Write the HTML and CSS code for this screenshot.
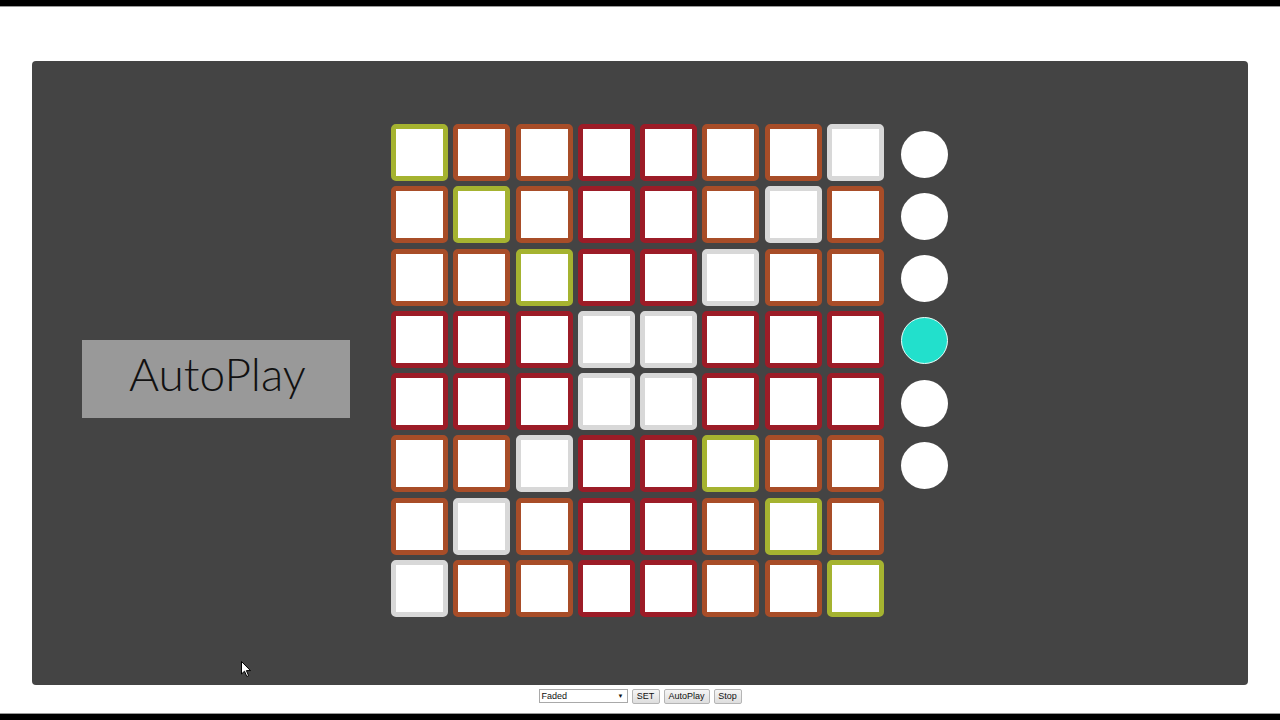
FILE: index.html
```html
<!DOCTYPE html>
<html>
<head>
<meta charset="utf-8">
<link rel="stylesheet" href="styles.css">
</head>
<body>
<div class="topbar"></div>
<div class="page">
  <div class="panel">
    <div class="autoplay">AutoPlay</div>
    <div class="grid">
      <div class="cell g"></div><div class="cell o"></div><div class="cell o"></div><div class="cell r"></div><div class="cell r"></div><div class="cell o"></div><div class="cell o"></div><div class="cell w"></div>
      <div class="cell o"></div><div class="cell g"></div><div class="cell o"></div><div class="cell r"></div><div class="cell r"></div><div class="cell o"></div><div class="cell w"></div><div class="cell o"></div>
      <div class="cell o"></div><div class="cell o"></div><div class="cell g"></div><div class="cell r"></div><div class="cell r"></div><div class="cell w"></div><div class="cell o"></div><div class="cell o"></div>
      <div class="cell r"></div><div class="cell r"></div><div class="cell r"></div><div class="cell w"></div><div class="cell w"></div><div class="cell r"></div><div class="cell r"></div><div class="cell r"></div>
      <div class="cell r"></div><div class="cell r"></div><div class="cell r"></div><div class="cell w"></div><div class="cell w"></div><div class="cell r"></div><div class="cell r"></div><div class="cell r"></div>
      <div class="cell o"></div><div class="cell o"></div><div class="cell w"></div><div class="cell r"></div><div class="cell r"></div><div class="cell g"></div><div class="cell o"></div><div class="cell o"></div>
      <div class="cell o"></div><div class="cell w"></div><div class="cell o"></div><div class="cell r"></div><div class="cell r"></div><div class="cell o"></div><div class="cell g"></div><div class="cell o"></div>
      <div class="cell w"></div><div class="cell o"></div><div class="cell o"></div><div class="cell r"></div><div class="cell r"></div><div class="cell o"></div><div class="cell o"></div><div class="cell g"></div>
    </div>
    <div class="circles">
      <div class="circle"></div>
      <div class="circle"></div>
      <div class="circle"></div>
      <div class="circle active"></div>
      <div class="circle"></div>
      <div class="circle"></div>
    </div>
    <svg class="cursor" width="12" height="18" viewBox="0 0 12 18"><path d="M0.5 0.5 L0.5 13 L3.5 10.2 L5.8 15.5 L7.6 14.7 L5.4 9.6 L9.5 9.6 Z" fill="#fff" stroke="#000" stroke-width="1"/></svg>
  </div>
  <div class="controls">
    <div class="select">Faded<span class="arrow">▼</span></div>
    <div class="btn w-set">SET</div>
    <div class="btn w-auto">AutoPlay</div>
    <div class="btn w-stop">Stop</div>
  </div>
</div>
<div class="bottombar"></div>
</body>
</html>
```
FILE: styles.css
```css
html, body {
  margin: 0;
  padding: 0;
  background: #fff;
  width: 1280px;
  height: 720px;
  overflow: hidden;
  font-family: "Liberation Sans", Arial, sans-serif;
}
.topbar {
  height: 6px;
  background: #000;
  border-bottom: 1px solid #9a9a9a;
}
.page {
  height: 706px;
  padding-top: 54px;
  box-sizing: border-box;
}
.panel {
  position: relative;
  margin-left: 32px;
  width: 1216px;
  height: 624px;
  box-sizing: border-box;
  background: #444444;
  border-radius: 4px;
  display: flex;
  align-items: flex-start;
  padding: 63px 0 0 50px;
}
.autoplay {
  margin-top: 216px;
  width: 268px;
  height: 78px;
  background: #999999;
  color: #111;
  font-family: Lato, "Open Sans", sans-serif;
  font-weight: 300;
  font-size: 46px;
  display: flex;
  align-items: center;
  justify-content: center;
  box-sizing: border-box;
  padding: 0 0 12px 3px;
}
.grid {
  margin-left: 41px;
  display: grid;
  grid-template-columns: repeat(8, 57px);
  grid-auto-rows: 57px;
  column-gap: 5.3px;
  row-gap: 5.3px;
}
.cell {
  box-sizing: border-box;
  background: #fff;
  border: 5px solid #d8d8d8;
  border-radius: 5px;
}
.cell.g { border-color: #a5b330; }
.cell.o { border-color: #a84d28; }
.cell.r { border-color: #9c1c27; }
.cell.w { border-color: #d8d8d8; }
.circles {
  margin-left: 17px;
  padding-top: 6.5px;
  display: flex;
  flex-direction: column;
  gap: 15.3px;
}
.circle {
  width: 47px;
  height: 47px;
  border-radius: 50%;
  background: #fff;
  box-sizing: border-box;
}
.circle.active {
  background: #22e0cc;
  border: 1px solid #e8fffb;
}
.cursor {
  position: absolute;
  left: 209px;
  top: 600px;
}
.controls {
  height: 22px;
  display: flex;
  align-items: center;
  justify-content: center;
  gap: 4px;
  padding-left: 0;
  font-size: 9px;
  color: #111;
}
.select {
  width: 89px;
  height: 14px;
  box-sizing: border-box;
  border: 1px solid #a9a9a9;
  background: #fff;
  display: flex;
  align-items: center;
  justify-content: space-between;
  padding: 0 3px 0 2px;
  font-size: 9px;
}
.arrow {
  font-size: 6px;
}
.btn {
  height: 15px;
  box-sizing: border-box;
  border: 1px solid #b5b5b5;
  background: linear-gradient(#f5f5f5, #dedede);
  border-radius: 2px;
  display: flex;
  align-items: center;
  justify-content: center;
  font-size: 9px;
}
.w-set { width: 28px; }
.w-auto { width: 46px; }
.w-stop { width: 28px; }
.bottombar {
  height: 7px;
  background: #000;
  border-top: 1px solid #9a9a9a;
  box-sizing: border-box;
}
```
